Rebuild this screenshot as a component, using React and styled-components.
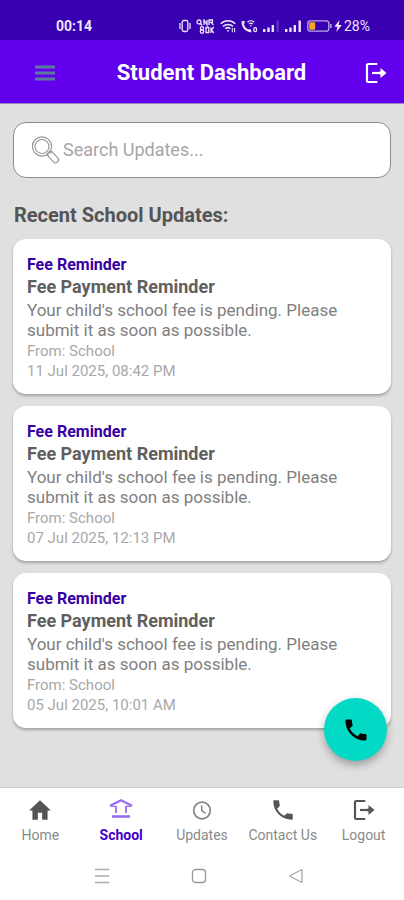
import React from 'react';
import styled, { createGlobalStyle } from 'styled-components';

const GlobalStyle = createGlobalStyle`
  * {
    box-sizing: border-box;
  }
  body {
    margin: 0;
    background-color: #e0e0e0;
    font-family: Roboto, 'Liberation Sans', sans-serif;
  }
  h1, h2, h3, p {
    margin: 0;
  }
  button {
    border: 0;
    padding: 0;
    background: none;
    font-family: inherit;
    cursor: pointer;
  }
`;

const Page = styled.div`
  display: flex;
  flex-direction: column;
  min-height: 100vh;
`;

const StatusBar = styled.div`
  display: flex;
  align-items: flex-end;
  justify-content: space-between;
  height: 40px;
  padding: 0 34px 6px 56px;
  background-color: #3800b0;
  color: #ece4fb;
  font-size: 14px;
  line-height: 16px;
`;

const Clock = styled.span`
  font-weight: 700;
`;

const StatusIcons = styled.div`
  display: flex;
  align-items: center;
  gap: 5px;
`;

const Battery = styled.span`
  display: flex;
  align-items: center;
  gap: 2px;
`;

const Header = styled.header`
  display: flex;
  align-items: center;
  height: 64px;
  padding: 2px 14px 0 29px;
  background-color: #6200ee;
  border-bottom: 1px solid #9a86c4;
`;

const HeaderButton = styled.button`
  display: flex;
  align-items: center;
  justify-content: center;
  width: ${({ $width }) => $width}px;
  height: 40px;
  color: ${({ $color }) => $color};
`;

const Title = styled.h1`
  flex: 1;
  color: #ffffff;
  font-size: 22px;
  font-weight: 700;
  line-height: 28px;
  text-align: center;
`;

const Main = styled.main`
  position: relative;
  flex: 1;
  padding: 18px 13px 24px;
  background-color: #e0e0e0;
`;

const SearchBox = styled.label`
  display: flex;
  align-items: center;
  gap: 3px;
  height: 56px;
  padding: 0 16px;
  background-color: #ffffff;
  border: 1px solid #8c8c8c;
  border-radius: 13px;
`;

const SearchInput = styled.input`
  flex: 1;
  min-width: 0;
  border: 0;
  padding: 0;
  outline: none;
  background: none;
  color: #555555;
  font-family: inherit;
  font-size: 18px;
  line-height: 24px;
  &::placeholder {
    color: #a6a6a6;
    opacity: 1;
  }
`;

const Heading = styled.h2`
  margin: 25px 0 12px;
  padding-left: 1px;
  color: #555555;
  font-size: 20px;
  font-weight: 700;
  line-height: 24px;
`;

const CardList = styled.div`
  display: flex;
  flex-direction: column;
  gap: 12px;
`;

const Card = styled.article`
  padding: 15px 14px 13px;
  background-color: #ffffff;
  border-radius: 13px;
  box-shadow: 0 2px 3px rgba(0, 0, 0, 0.28);
`;

const Category = styled.p`
  color: #3700a3;
  font-size: 16px;
  font-weight: 700;
  line-height: 22px;
`;

const CardTitle = styled.h3`
  margin-bottom: 2px;
  color: #5f5f5f;
  font-size: 18px;
  font-weight: 700;
  line-height: 22px;
`;

const Message = styled.p`
  margin-bottom: 1px;
  color: #808080;
  font-size: 17px;
  line-height: 20px;
`;

const Meta = styled.p`
  color: #a8a8a8;
  font-size: 15px;
  line-height: 20px;
`;

const CallButton = styled.button`
  position: absolute;
  right: 17px;
  bottom: 26px;
  display: flex;
  align-items: center;
  justify-content: center;
  width: 63px;
  height: 63px;
  border-radius: 50%;
  background-color: #03dac5;
  color: #000000;
  box-shadow: 0 4px 8px rgba(0, 0, 0, 0.3);
`;

const BottomNav = styled.nav`
  display: grid;
  grid-template-columns: repeat(5, 1fr);
  height: 64px;
  padding-top: 9px;
  background-color: #ffffff;
  border-top: 1px solid #cfcfcf;
`;

const NavItem = styled.a`
  display: flex;
  flex-direction: column;
  align-items: center;
  gap: 3px;
  color: ${({ $active }) => ($active ? '#4200c8' : '#8a8a8a')};
  font-size: 14px;
  font-weight: ${({ $active }) => ($active ? 700 : 400)};
  line-height: 18px;
  text-decoration: none;
  white-space: nowrap;
`;

const IconSlot = styled.span`
  display: flex;
  align-items: center;
  height: 26px;
  color: ${({ $color }) => $color || 'inherit'};
`;

const SystemNav = styled.div`
  display: flex;
  align-items: center;
  justify-content: center;
  gap: 69px;
  height: 49px;
  padding-right: 6px;
  background-color: #ffffff;
`;

const SystemButton = styled.button`
  display: flex;
  align-items: center;
  justify-content: center;
  width: 28px;
  height: 28px;
`;

const VibrateIcon = () => (
  <svg width="12" height="14" viewBox="0 0 12 14" fill="none" stroke="currentColor" strokeWidth="1.3">
    <rect x="3.2" y="1.5" width="5.6" height="11" rx="1.8" />
    <path d="M1 4v6M11 4v6" />
  </svg>
);

// Two lines of tiny network data
const NetworkIcon = () => (
  <svg width="19" height="15" viewBox="0 0 19 15" fill="none" stroke="currentColor" strokeWidth="1.3">
    <circle cx="3" cy="3" r="2" />
    <path d="M4.5 4.5L6 6.5M8 6V1l3 5V1M13 6V1h3.5v2.4H13M15 3.4L17.5 6" />
    <circle cx="6" cy="9.3" r="1.6" />
    <circle cx="6" cy="12.6" r="1.7" />
    <path d="M10 8.5h2.8v5H10zM15 14V8.5M17.8 8l-2.5 3 2.5 3" />
  </svg>
);

const WifiIcon = () => (
  <svg width="16" height="14" viewBox="0 0 16 14" fill="none" stroke="currentColor" strokeWidth="1.5">
    <path d="M.7 4.8C4.8.8 11.2.8 15.3 4.8M3 7.4c2.8-2.7 7.2-2.7 10 0M5.3 9.8c1.5-1.4 3.4-1.5 5 0" />
    <path d="M8 12.9l-1.5-1.7h3z" fill="currentColor" stroke="none" />
    <path d="M12.3 9v4.2M14.6 9v4.2" strokeWidth="1.1" />
  </svg>
);

const CallWifiIcon = () => (
  <svg width="17" height="14" viewBox="0 0 17 14" fill="none" stroke="currentColor">
    <path d="M1.7 2C1.2 8 5 12 10.3 12.4" strokeWidth="2.1" />
    <path d="M1 3.3h2.6M8.6 10.2v2.6" strokeWidth="2.6" />
    <path d="M6.5 3.2c1.9-1.7 4.9-1.7 6.8 0M8 5c1.1-.9 2.8-.9 3.8 0M9.9 6v1.6" strokeWidth="1.2" />
    <rect x="12.9" y="8.7" width="2.6" height="3.9" rx="1" strokeWidth="1.3" />
  </svg>
);

const SignalIcon = ({ weak }) => (
  <svg width="17" height="14" viewBox="0 0 17 14" fill="currentColor">
    <path d="M0 10h2.4v3H0zM4.3 8.5h2.4V13H4.3zM8.6 6H11v7H8.6z" />
    <path d="M13.5 1.5h2.4V13h-2.4z" opacity={weak ? 0.2 : 1} />
  </svg>
);

const BatteryIcon = () => (
  <svg width="25" height="14" viewBox="0 0 25 14" fill="none">
    <rect x=".8" y="1.8" width="21" height="10.4" rx="2.5" stroke="#b9a9e6" strokeWidth="1.3" />
    <path d="M23.8 5v4" stroke="#b9a9e6" strokeWidth="1.6" />
    <rect x="2.2" y="3.2" width="6" height="7.6" rx="1" fill="#f5a623" />
  </svg>
);

const BoltIcon = () => (
  <svg width="8" height="12" viewBox="0 0 8 12" fill="currentColor">
    <path d="M5.5 0L.3 6.8h3L2.4 12 7.8 5H4.7z" />
  </svg>
);

const MenuIcon = () => (
  <svg width="20" height="16" viewBox="0 0 20 16" fill="currentColor">
    <path d="M0 .5h20v3H0zM0 6.500h20v3H0zM0 12.500h20v3H0z" />
  </svg>
);

const LogoutIcon = () => (
  <svg width="22" height="22" viewBox="0 0 22 22" fill="none" stroke="currentColor" strokeWidth="2.2">
    <path d="M12.3 2H3.2C2.5 2 2 2.5 2 3.2v15.6c0 .7.5 1.2 1.2 1.2h9.1" />
    <path d="M7 11h12.5" />
    <path d="M15.5 6l6 5-6 5v-3.4h-1V9.4h1z" fill="currentColor" stroke="none" />
  </svg>
);

const SearchIcon = () => (
  <svg width="30" height="30" viewBox="0 0 30 30" fill="none" stroke="#999999" strokeWidth="1.2">
    <circle cx="12" cy="11.5" r="9.6" />
    <circle cx="12" cy="11.5" r="7" />
    <rect x="20" y="15.5" width="6" height="13" rx="2.6" transform="rotate(-43 23 22)" />
    <path d="M17 19.500l1.600 1.600M20 16.800l1.600 1.400" />
  </svg>
);

const PhoneIcon = ({ size = 28 }) => (
  <svg width={size} height={size} viewBox="0 0 24 24" fill="currentColor">
    <path d="M6.620 10.790c1.440 2.830 3.760 5.140 6.590 6.590l2.200-2.200c.27-.27.67-.36 1.020-.24 1.120.37 2.330.57 3.570.57.55 0 1 .45 1 1V20c0 .55-.45 1-1 1-9.390 0-17-7.610-17-17 0-.55.45-1 1-1h3.500c.55 0 1 .45 1 1 0 1.250.2 2.450.57 3.570.11.35.03.74-.25 1.020l-2.200 2.200z" />
  </svg>
);

const HomeIcon = () => (
  <svg width="26" height="26" viewBox="0 0 24 24" fill="#555555">
    <path d="M10 21v-6.500h4V21h5v-8.500h3L12 3 2 12.500h3V21z" />
  </svg>
);

const SchoolIcon = () => (
  <svg width="26" height="26" viewBox="0 0 26 26" fill="none" stroke="#9a6cf4">
    <path d="M2 8.800L13 3.300l11 5.500" strokeWidth="2.400" />
    <path d="M3 9.300h5.500M17.500 9.300H23" strokeWidth="1.200" />
    <path d="M8 9v7M18 9v7" strokeWidth="1.800" />
    <path d="M4 19.500h18" strokeWidth="2.600" />
  </svg>
);

const ClockIcon = () => (
  <svg width="26" height="26" viewBox="0 0 26 26" fill="none" stroke="#858585" strokeWidth="1.7">
    <circle cx="13" cy="13.5" r="8.300" />
    <path d="M12.700 8.500v5.200l3.800 2.600" strokeWidth="1.4" />
  </svg>
);

const updates = [
  { id: 1, date: '11 Jul 2025, 08:42 PM' },
  { id: 2, date: '07 Jul 2025, 12:13 PM' },
  { id: 3, date: '05 Jul 2025, 10:01 AM' },
];

const navItems = [
  { label: 'Home', icon: <HomeIcon /> },
  { label: 'School', icon: <SchoolIcon />, active: true },
  { label: 'Updates', icon: <ClockIcon /> },
  { label: 'Contact Us', icon: <PhoneIcon size={26} />, color: '#555555' },
  { label: 'Logout', icon: <LogoutIcon />, color: '#555555' },
];

const UpdateCard = ({ category, title, message, from, date }) => (
  <Card>
    <Category>{category}</Category>
    <CardTitle>{title}</CardTitle>
    <Message>{message}</Message>
    <Meta>From: {from}</Meta>
    <Meta>{date}</Meta>
  </Card>
);

const App = () => (
  <Page>
    <GlobalStyle />
    <StatusBar>
      <Clock>00:14</Clock>
      <StatusIcons>
        <VibrateIcon />
        <NetworkIcon />
        <WifiIcon />
        <CallWifiIcon />
        <SignalIcon weak />
        <SignalIcon />
        <Battery>
          <BatteryIcon />
          <BoltIcon />
          <span>28%</span>
        </Battery>
      </StatusIcons>
    </StatusBar>
    <Header>
      <HeaderButton type="button" aria-label="Menu" $width={32} $color="#5c7a9c">
        <MenuIcon />
      </HeaderButton>
      <Title>Student Dashboard</Title>
      <HeaderButton type="button" aria-label="Logout" $width={28} $color="#ffffff">
        <LogoutIcon />
      </HeaderButton>
    </Header>
    <Main>
      <SearchBox>
        <SearchIcon />
        <SearchInput type="text" aria-label="Search Updates" placeholder="Search Updates..." />
      </SearchBox>
      <Heading>Recent School Updates:</Heading>
      <CardList>
        {updates.map(({ id, date }) => (
          <UpdateCard
            key={id}
            category="Fee Reminder"
            title="Fee Payment Reminder"
            message="Your child's school fee is pending. Please submit it as soon as possible."
            from="School"
            date={date}
          />
        ))}
      </CardList>
      <CallButton type="button" aria-label="Call school">
        <PhoneIcon />
      </CallButton>
    </Main>
    <BottomNav>
      {navItems.map(({ label, icon, active, color }) => (
        <NavItem key={label} href="#" $active={active}>
          <IconSlot $color={color}>{icon}</IconSlot>
          {label}
        </NavItem>
      ))}
    </BottomNav>
    <SystemNav>
      <SystemButton type="button" aria-label="Recent apps">
        <svg width="16" height="16" viewBox="0 0 16 16" stroke="#aaaaaa" strokeWidth="1.3">
          <path d="M1 1.500h14M1 8h14M1 14.500h14" />
        </svg>
      </SystemButton>
      <SystemButton type="button" aria-label="Home screen">
        <svg width="16" height="16" viewBox="0 0 16 16" fill="none" stroke="#999999" strokeWidth="1.3">
          <rect x="1.5" y="1.5" width="13" height="13" rx="3" />
        </svg>
      </SystemButton>
      <SystemButton type="button" aria-label="Back">
        <svg width="16" height="16" viewBox="0 0 16 16" fill="none" stroke="#aaaaaa" strokeWidth="1.3" strokeLinejoin="round">
          <path d="M1.500 8L14 1.500v13z" />
        </svg>
      </SystemButton>
    </SystemNav>
  </Page>
);

export default App;
